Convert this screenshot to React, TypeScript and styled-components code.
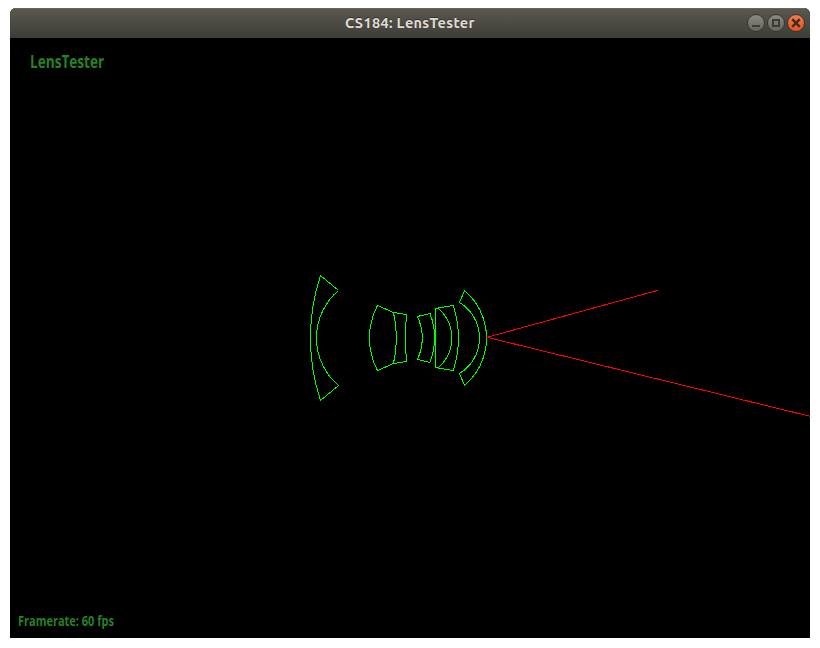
import React from "react";
import styled, { createGlobalStyle } from "styled-components";

const GlobalStyle = createGlobalStyle`
  * { box-sizing: border-box; }
  body { margin: 0; background: #fff; overflow: hidden; }
`;

const Desktop = styled.div`
  width: 820px;
  height: 648px;
  padding: 8px 10px 10px;
  background: #fff;
`;

const Window = styled.main`
  display: flex;
  flex-direction: column;
  width: 800px;
  height: 630px;
  border-radius: 6px 6px 0 0;
  overflow: hidden;
  background: #000;
`;

const TitleBar = styled.header`
  display: grid;
  grid-template-columns: 1fr auto 1fr;
  align-items: center;
  height: 30px;
  padding-right: 5px;
  background: linear-gradient(#5b584f, #3d3c38);
  box-shadow: inset 0 1px #69665d;
`;

const Title = styled.h1`
  grid-column: 2;
  width: 130px;
  margin: 0 0 0 5px;
  color: #dfdbd2;
  font: 700 14.5px/30px Ubuntu, "Noto Sans", sans-serif;
  letter-spacing: 0.33px;
  white-space: nowrap;
  text-shadow: 0 -1px #33322e;
`;

const Controls = styled.div`
  display: flex;
  justify-content: flex-end;
  gap: 2px;
`;

const Control = styled.button<{ $close?: boolean }>`
  display: grid;
  place-items: center;
  width: 18px;
  height: 18px;
  padding: 0;
  border: 1px solid #373632;
  border-radius: 50%;
  background: ${(p) => (p.$close ? "linear-gradient(#f5784f, #e9541f)" : "linear-gradient(#8a8880, #66645e)")};
  svg { display: block; }
`;

const Canvas = styled.section`
  display: grid;
  grid-template: 1fr / 1fr;
  height: 600px;
  background: #000;
`;

const Drawing = styled.svg`
  grid-area: 1 / 1;
  display: block;
  fill: none;
  stroke-width: 1;
  shape-rendering: crispEdges;
`;

const Label = styled.span<{ $size: number; $squeeze: number; $bottom?: boolean }>`
  grid-area: 1 / 1;
  align-self: ${(p) => (p.$bottom ? "end" : "start")};
  justify-self: start;
  margin: ${(p) => (p.$bottom ? "0 0 7px 8px" : "14px 0 0 20px")};
  color: #268126;
  font: 700 ${(p) => p.$size}px/20px "Open Sans", sans-serif;
  white-space: nowrap;
  transform: scaleX(${(p) => p.$squeeze});
  transform-origin: left;
`;

const lenses = [
  "M338.5 290.5 L320.5 275.5 A200 200 0 0 0 320.5 400.5 L338.5 385.5 A62.3 62.3 0 0 1 338.5 290.5",
  "M393.5 312.5 L377.5 305.5 A70 70 0 0 0 377.5 370.5 L393.5 363.5 A114 114 0 0 0 393.5 312.5",
  "M393.5 312.5 L406.5 314.5 A288 288 0 0 0 406.5 361.5 L393.5 363.5",
  "M417.5 316.5 L430 313.5 A69 69 0 0 1 430 362.5 L417.5 359.5 A53 53 0 0 0 417.5 316.5",
  "M435.5 367.5 L435.5 308.5 L453.3 305.5 A108 108 0 0 1 453.3 370.5 L435.5 367.5 M438.5 308.5 A39.5 39.5 0 0 1 438.5 367.5",
  "M459.5 302.5 L464.5 290.5 A62.3 62.3 0 0 1 464.5 385.5 L459.5 373.5 A41.5 41.5 0 0 0 459.5 302.5",
];

export default function App() {
  return (
    <>
      <GlobalStyle />
      <Desktop>
        <Window>
          <TitleBar>
            <Title>CS184: LensTester</Title>
            <Controls>
              <Control aria-label="Minimize">
                <svg width="16" height="16"><path d="M4 11h8" stroke="#3c3b37" strokeWidth="2" /></svg>
              </Control>
              <Control aria-label="Maximize">
                <svg width="16" height="16"><rect x="5" y="5" width="6" height="6" fill="none" stroke="#3c3b37" strokeWidth="2" /></svg>
              </Control>
              <Control $close aria-label="Close">
                <svg width="16" height="16"><path d="M4.2 4.2l7.6 7.6M11.8 4.2l-7.6 7.6" stroke="#3c2f1c" strokeWidth="2.4" /></svg>
              </Control>
            </Controls>
          </TitleBar>
          <Canvas>
            <Drawing width="800" height="600" viewBox="10 38 800 600">
              <g stroke="#00ff00">
                {lenses.map((d) => <path key={d} d={d} />)}
              </g>
              <path d="M658 290.3L487 337.3L810 416.3" stroke="#ff0000" />
            </Drawing>
            <Label $size={17} $squeeze={0.8}>LensTester</Label>
            <Label $size={14} $squeeze={0.785} $bottom>Framerate: 60 fps</Label>
          </Canvas>
        </Window>
      </Desktop>
    </>
  );
}
